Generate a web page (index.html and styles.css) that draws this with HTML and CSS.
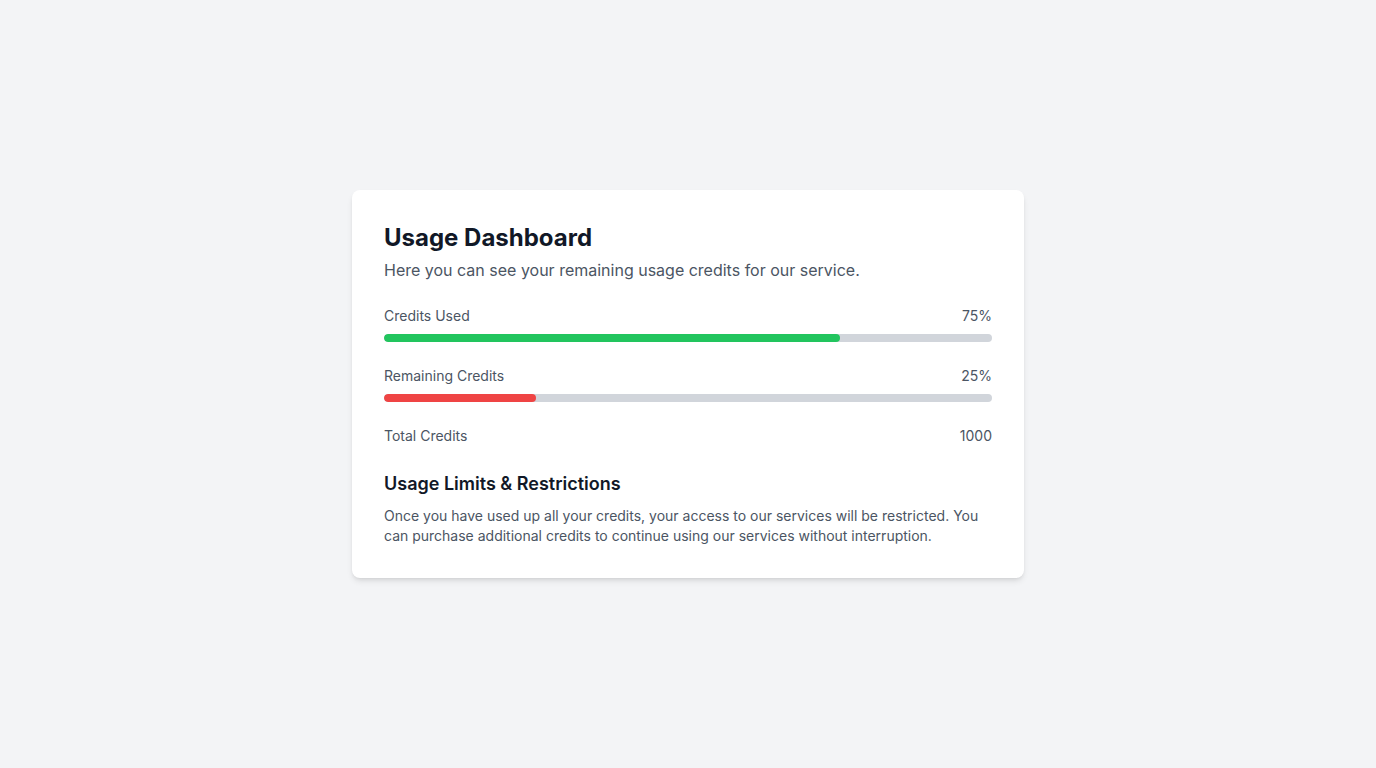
FILE: index.html
```html
<!DOCTYPE html>
<html lang="en">
<head>
<meta charset="utf-8">
<title>Usage Dashboard</title>
<link rel="stylesheet" href="styles.css">
</head>
<body>
<main class="page">
  <section class="card">
    <h1 class="title">Usage Dashboard</h1>
    <p class="subtitle">Here you can see your remaining usage credits for our service.</p>

    <div class="metric">
      <div class="metric-row"><span>Credits Used</span><span>75%</span></div>
      <div class="track"><div class="fill fill-green" style="width:75%"></div></div>
    </div>

    <div class="metric">
      <div class="metric-row"><span>Remaining Credits</span><span>25%</span></div>
      <div class="track"><div class="fill fill-red" style="width:25%"></div></div>
    </div>

    <div class="metric">
      <div class="metric-row total"><span>Total Credits</span><span>1000</span></div>
    </div>

    <h2 class="section-title">Usage Limits &amp; Restrictions</h2>
    <p class="section-text">Once you have used up all your credits, your access to our services will be restricted. You can purchase additional credits to continue using our services without interruption.</p>
  </section>
</main>
</body>
</html>
```

FILE: styles.css
```css
* { box-sizing: border-box; }
html, body { margin: 0; padding: 0; }
body {
  background: #f3f4f6;
  font-family: Inter, "Noto Sans", sans-serif;
  color: #4b5563;
}
.page {
  min-height: 768px;
  display: flex;
  align-items: center;
  justify-content: center;
}
.card {
  width: 672px;
  background: #ffffff;
  border-radius: 8px;
  padding: 32px;
  box-shadow: 0 4px 6px -1px rgba(0,0,0,0.1), 0 2px 4px -2px rgba(0,0,0,0.1);
}
.title {
  margin: 0;
  font-size: 24px;
  line-height: 32px;
  font-weight: 700;
  color: #111827;
}
.subtitle {
  margin: 4px 0 0;
  font-size: 16px;
  line-height: 24px;
  color: #4b5563;
}
.metric { margin-top: 24px; }
.metric-row {
  display: flex;
  justify-content: space-between;
  font-size: 14px;
  line-height: 20px;
  color: #4b5563;
  margin-bottom: 8px;
}
.metric-row.total { margin-bottom: 0; }
.track {
  height: 8px;
  border-radius: 9999px;
  background: #d1d5db;
  overflow: hidden;
}
.fill { height: 100%; border-radius: 9999px; }
.fill-green { background: #22c55e; }
.fill-red { background: #ef4444; }
.section-title {
  margin: 24px 0 0;
  font-size: 18px;
  line-height: 28px;
  font-weight: 600;
  color: #111827;
}
.section-text {
  margin: 8px 0 0;
  font-size: 14px;
  line-height: 20px;
  color: #4b5563;
}
```
